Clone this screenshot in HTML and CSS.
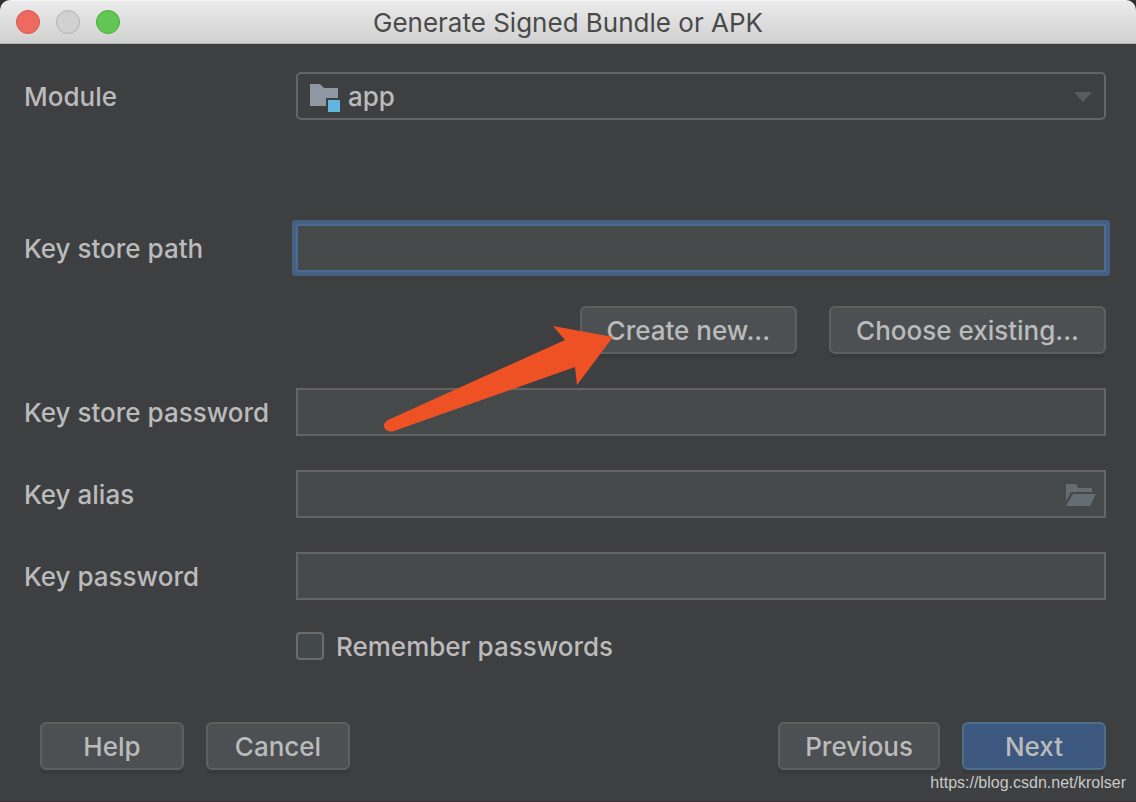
FILE: index.html
```
<!DOCTYPE html>
<html lang="en">
<head>
    <meta charset="UTF-8">
    <meta name="viewport" content="width=device-width, initial-scale=1.0">
    <title>Generate Signed Bundle or APK</title>
    <link rel="stylesheet" href="styles.css">
</head>
<body>
    <div class="dialog">
        <header class="titlebar">
            <div class="window-controls">
                <button type="button" class="dot close" aria-label="Close"></button>
                <button type="button" class="dot minimize" aria-label="Minimize" disabled></button>
                <button type="button" class="dot zoom" aria-label="Zoom"></button>
            </div>
            <h1>Generate Signed Bundle or APK</h1>
        </header>

        <form class="content">
            <div class="row module-row">
                <label for="module">Module</label>
                <div class="field">
                    <select id="module">
                        <option>app</option>
                    </select>
                    <svg class="module-icon" width="30" height="28" viewBox="0 0 30 28">
                        <path d="M0 0h10l4 4h14v10H16v8H0z" fill="#8e98a2"/>
                        <path d="M18 16h12v12H18z" fill="#62b5e0"/>
                    </svg>
                    <svg class="select-arrow" width="18" height="10" viewBox="0 0 18 10">
                        <path d="M0 0h18l-9 10z" fill="#5c5c5c"/>
                    </svg>
                </div>
            </div>

            <div class="row">
                <label for="store-path">Key store path</label>
                <input type="text" id="store-path" class="text-input active">
            </div>

            <div class="store-buttons">
                <div class="create">
                    <button type="button" class="btn">Create new...</button>
                    <!-- pointer to the button -->
                    <svg class="pointer" width="230" height="106" viewBox="0 0 230 106">
                        <path d="M229 11 169 0 181 14 4 94Q-1 97 0 101Q3 107 10 105L191 41 193 59z" fill="#ee5124"/>
                    </svg>
                </div>
                <button type="button" class="btn">Choose existing...</button>
            </div>

            <div class="row">
                <label for="store-password">Key store password</label>
                <input type="password" id="store-password" class="text-input">
            </div>

            <div class="row">
                <label for="alias">Key alias</label>
                <div class="field">
                    <input type="text" id="alias" class="text-input">
                    <button type="button" class="browse" aria-label="Browse">
                        <svg width="30" height="22" viewBox="0 0 30 22">
                            <path d="M0 0h10l2 4h14v4H5L0 17z" fill="#646e72"/>
                            <path d="M7 10h23l-6 12H0z" fill="#646e72"/>
                        </svg>
                    </button>
                </div>
            </div>

            <div class="row">
                <label for="key-password">Key password</label>
                <input type="password" id="key-password" class="text-input">
            </div>

            <div class="remember">
                <input type="checkbox" id="remember">
                <label for="remember">Remember passwords</label>
            </div>

            <div class="actions">
                <button type="button" class="btn">Help</button>
                <button type="button" class="btn">Cancel</button>
                <button type="button" class="btn previous">Previous</button>
                <button type="button" class="btn primary">Next</button>
            </div>
        </form>

        <a class="source" href="https://blog.csdn.net/krolser">https://blog.csdn.net/krolser</a>
    </div>
</body>
</html>
```
FILE: styles.css
```
* {
    box-sizing: border-box;
}

body {
    margin: 0;
    background-color: #332e36;
    color: #bbbbbb;
    font-family: Inter, 'Liberation Sans', sans-serif;
    font-size: 26px;
    font-weight: 500;
    line-height: 32px;
}

.dialog {
    position: relative;
    min-height: 100vh;
    background-color: #3d3f41;
    border-radius: 10px 10px 0 0;
    border-bottom: 1px solid #382f34;
    overflow: hidden;
}

.titlebar {
    display: grid;
    grid-template-columns: 1fr auto 1fr;
    align-items: center;
    height: 44px;
    padding: 0 16px;
    background: linear-gradient(#ebebeb, #d1d1d1);
    border-top: 1px solid #f6f6f6;
    border-bottom: 1px solid #b0b2b3;
}

.titlebar h1 {
    margin: 0;
    padding-top: 2px;
    font-size: 26px;
    font-weight: 400;
    color: #4a4a4a;
}

.window-controls {
    display: flex;
    gap: 16px;
}

.dot {
    width: 24px;
    height: 24px;
    padding: 0;
    border: 1px solid;
    border-radius: 50%;
}

.close {
    background-color: #ee6a5f;
    border-color: #d9544b;
}

.minimize {
    background-color: #d1d1d1;
    border-color: #b2b2b2;
}

.zoom {
    background-color: #61c654;
    border-color: #4aab3a;
}

.content {
    display: flex;
    flex-direction: column;
    gap: 34px;
    padding: 28px 30px 30px 24px;
}

.row {
    display: grid;
    grid-template-columns: 272px 1fr;
    align-items: center;
}

label {
    padding-top: 2px;
}

.module-row {
    margin-bottom: 70px;
}

.field {
    position: relative;
}

select,
.text-input {
    display: block;
    width: 100%;
    height: 48px;
    border: 2px solid #646464;
    border-radius: 0;
    color: #bbbbbb;
    font: inherit;
    outline: none;
}

select {
    appearance: none;
    padding: 2px 40px 0 50px;
    background-color: #3d3f41;
    border-radius: 5px;
}

.text-input {
    padding: 0 10px;
    background-color: #45494a;
}

.text-input.active {
    border-color: #4b6b93;
    box-shadow: 0 0 0 4px #456083;
    border-radius: 1px;
}

.module-icon {
    position: absolute;
    left: 14px;
    top: 12px;
    pointer-events: none;
}

.select-arrow {
    position: absolute;
    right: 14px;
    top: 20px;
    pointer-events: none;
}

.browse {
    position: absolute;
    right: 10px;
    top: 14px;
    padding: 0;
    border: none;
    background: none;
}

.browse svg {
    display: block;
}

.btn {
    min-width: 144px;
    height: 48px;
    padding: 2px 25px 0;
    background-color: #4c5052;
    border: 2px solid #5e6060;
    border-radius: 6px;
    box-shadow: 0 4px 0 #38393b;
    color: #bbbbbb;
    font: inherit;
}

.btn.primary {
    background-color: #3c587f;
    border-color: #4c708c;
}

.store-buttons {
    display: flex;
    justify-content: flex-end;
    gap: 32px;
}

.create {
    position: relative;
}

.pointer {
    position: absolute;
    left: -196px;
    top: 20px;
    z-index: 1;
    pointer-events: none;
}

.remember {
    display: flex;
    align-items: center;
    gap: 12px;
    height: 28px;
    margin: -2px 0 0 272px;
}

.remember input {
    appearance: none;
    width: 28px;
    height: 28px;
    margin: 0;
    background-color: #43494a;
    border: 2px solid #6b6b6b;
    border-radius: 4px;
}

.actions {
    display: flex;
    gap: 22px;
    margin-top: 28px;
    padding-left: 16px;
}

.previous {
    margin-left: auto;
}

.source {
    position: absolute;
    right: 10px;
    bottom: 8px;
    color: #c9c9c9;
    font-family: 'Liberation Sans', Arial, sans-serif;
    font-size: 16px;
    font-weight: 400;
    line-height: 20px;
    text-decoration: none;
}
```
